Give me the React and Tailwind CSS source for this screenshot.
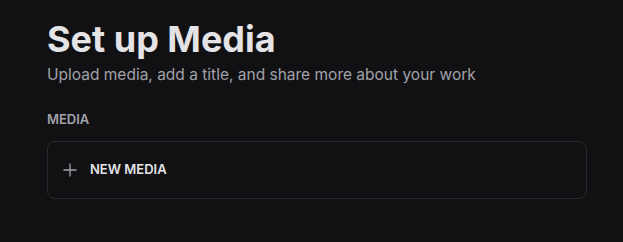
import React from "react";

export default function App() {
  return (
    <div className="min-h-[242px] w-full bg-[#111113] pl-[47px] pr-[36px] pt-[19px]" style={{ fontFamily: "Inter, 'Noto Sans', sans-serif" }}>
      <h1 className="text-[36px] font-bold leading-[40px] text-[#e4e4e7]">Set up Media</h1>
      <p className="mt-[5px] text-[15.5px] leading-[22px] text-[#a1a1aa]">Upload media, add a title, and share more about your work</p>
      <div className="mt-[25px] text-[13px] font-semibold leading-[16px] text-[#a1a1aa]">MEDIA</div>
      <div className="mt-[14px] flex h-[58px] w-[540px] items-center rounded-[8px] border border-[#2a2a2e] px-[15px]">
        <svg width="14" height="14" viewBox="0 0 14 14" className="text-[#a1a1aa]">
          <path d="M7 0.5V13.5M0.5 7H13.5" stroke="currentColor" strokeWidth="1.3" fill="none" />
        </svg>
        <span className="ml-[13px] text-[13px] font-semibold text-[#e4e4e7]">NEW MEDIA</span>
      </div>
    </div>
  );
}
